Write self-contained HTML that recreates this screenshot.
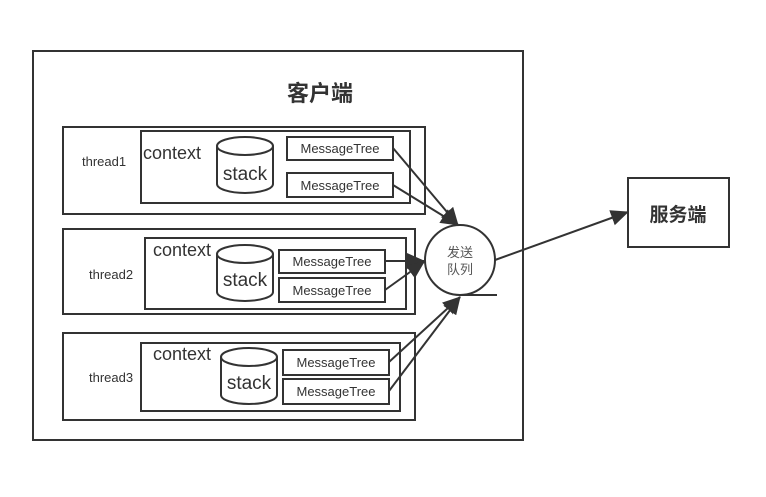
<!DOCTYPE html>
<html><head><meta charset="utf-8"><style>
html,body{margin:0;padding:0;background:#fff;width:766px;height:497px;overflow:hidden}
text{font-family:"Liberation Sans","Noto Sans CJK SC",sans-serif;fill:#333}
</style></head><body>
<svg width="766" height="497" viewBox="0 0 766 497" xmlns="http://www.w3.org/2000/svg">
<defs>
<marker id="b" markerWidth="18" markerHeight="16" refX="17" refY="8" orient="auto" markerUnits="userSpaceOnUse" viewBox="0 0 18 16">
<path d="M0,0 L18,8 L0,16 Z" fill="#333"/></marker>
</defs>
<g fill="none" stroke="#333" stroke-width="2">
<rect x="33" y="51" width="490" height="389"/>
<rect x="63" y="127" width="362" height="87"/>
<rect x="141" y="131" width="269" height="72"/>
<rect x="287" y="137" width="106" height="23"/>
<rect x="287" y="173" width="106" height="24"/>
<rect x="63" y="229" width="352" height="85"/>
<rect x="145" y="238" width="261" height="71"/>
<rect x="279" y="250" width="106" height="23"/>
<rect x="279" y="278" width="106" height="24"/>
<rect x="63" y="333" width="352" height="87"/>
<rect x="141" y="343" width="259" height="68"/>
<rect x="283" y="350" width="106" height="25"/>
<rect x="283" y="379" width="106" height="25"/>
<rect x="628" y="178" width="101" height="69"/>
<circle cx="460" cy="260" r="35"/>
<line x1="460" y1="295" x2="497" y2="295"/>
</g>
<g fill="#fff" stroke="#333" stroke-width="2">
<path d="M217,146 v38 a28,9 0 0 0 56,0 v-38"/>
<ellipse cx="245" cy="146" rx="28" ry="9"/>
<path d="M217,254 v38 a28,9 0 0 0 56,0 v-38"/>
<ellipse cx="245" cy="254" rx="28" ry="9"/>
<path d="M221,357 v38 a28,9 0 0 0 56,0 v-38"/>
<ellipse cx="249" cy="357" rx="28" ry="9"/>
</g>
<g stroke="#333" stroke-width="2" fill="none">
<line x1="393" y1="148" x2="458" y2="225" marker-end="url(#b)"/>
<line x1="393" y1="185" x2="458" y2="225" marker-end="url(#b)"/>
<line x1="385" y1="261" x2="424" y2="261" marker-end="url(#b)"/>
<line x1="385" y1="290" x2="424" y2="262" marker-end="url(#b)"/>
<line x1="389" y1="362" x2="460" y2="297" marker-end="url(#b)"/>
<line x1="389" y1="391" x2="460" y2="297" marker-end="url(#b)"/>
<line x1="495" y1="260" x2="628" y2="212" marker-end="url(#b)"/>
</g>
<text x="320" y="101" font-size="22" font-weight="bold" text-anchor="middle">客户端</text>
<text x="678" y="221" font-size="19" font-weight="bold" text-anchor="middle">服务端</text>
<text x="460" y="257" font-size="13" text-anchor="middle" style="fill:#555">发送</text>
<text x="460" y="274" font-size="13" text-anchor="middle" style="fill:#555">队列</text>
<text x="82" y="166" font-size="13">thread1</text>
<text x="89" y="279" font-size="13">thread2</text>
<text x="89" y="382" font-size="13">thread3</text>
<text x="143" y="159" font-size="18">context</text>
<text x="153" y="256" font-size="18">context</text>
<text x="153" y="360" font-size="18">context</text>
<text x="245" y="180" font-size="19" text-anchor="middle">stack</text>
<text x="245" y="286" font-size="19" text-anchor="middle">stack</text>
<text x="249" y="389" font-size="19" text-anchor="middle">stack</text>
<g font-size="13" text-anchor="middle">
<text x="340" y="153">MessageTree</text>
<text x="340" y="190">MessageTree</text>
<text x="332" y="266">MessageTree</text>
<text x="332" y="295">MessageTree</text>
<text x="336" y="367">MessageTree</text>
<text x="336" y="396">MessageTree</text>
</g>
</svg>
</body></html>
